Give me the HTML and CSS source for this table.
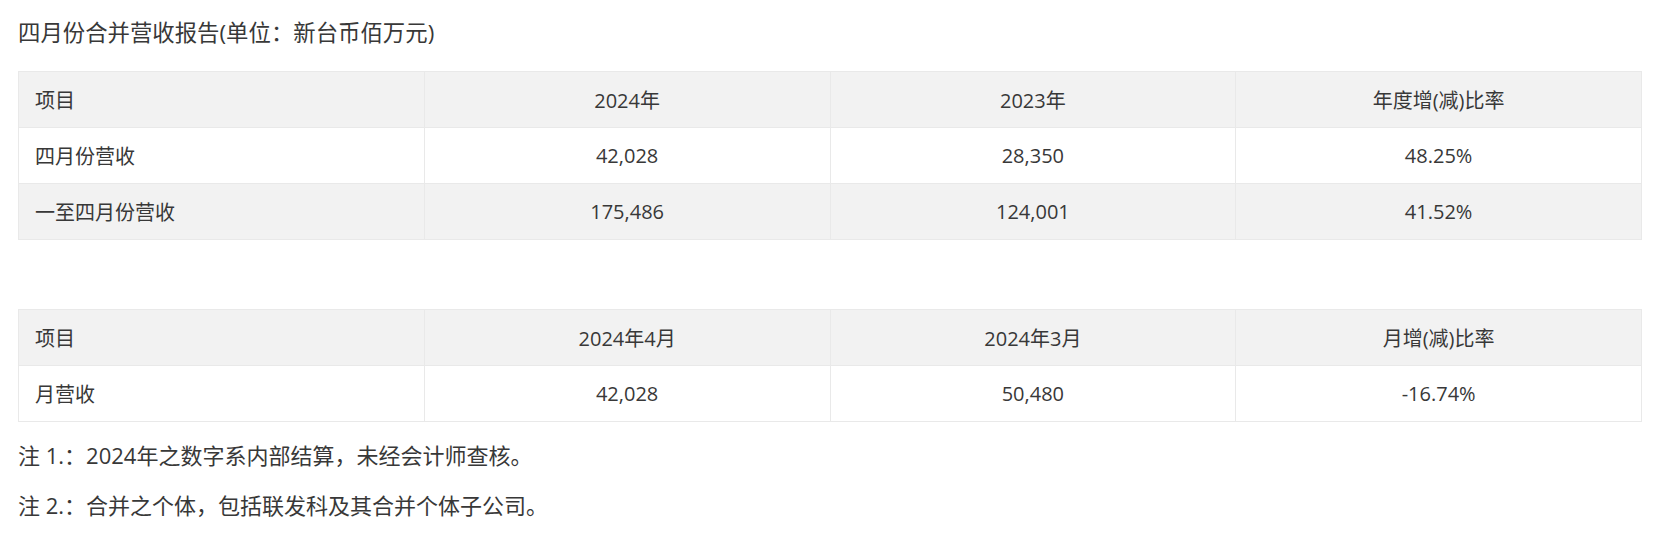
FILE: index.html
```html
<!DOCTYPE html>
<html lang="zh-CN">
<head>
<meta charset="utf-8">
<title>四月份合并营收报告</title>
<link rel="stylesheet" href="styles.css">
</head>
<body>
<div class="page">
  <h2 class="title">四月份合并营收报告(单位：新台币佰万元)</h2>
  <table class="report">
    <thead>
      <tr><th class="first">项目</th><th>2024年</th><th>2023年</th><th>年度增(减)比率</th></tr>
    </thead>
    <tbody>
      <tr><td class="first">四月份营收</td><td>42,028</td><td>28,350</td><td>48.25%</td></tr>
      <tr class="alt"><td class="first">一至四月份营收</td><td>175,486</td><td>124,001</td><td>41.52%</td></tr>
    </tbody>
  </table>
  <table class="report second">
    <thead>
      <tr><th class="first">项目</th><th>2024年4月</th><th>2024年3月</th><th>月增(减)比率</th></tr>
    </thead>
    <tbody>
      <tr><td class="first">月营收</td><td>42,028</td><td>50,480</td><td>-16.74%</td></tr>
    </tbody>
  </table>
  <p class="note">注 1.：2024年之数字系内部结算，未经会计师查核。</p>
  <p class="note">注 2.：合并之个体，包括联发科及其合并个体子公司。</p>
</div>
</body>
</html>
```
FILE: styles.css
```css
html, body {
  margin: 0;
  padding: 0;
  background: #ffffff;
}
body {
  font-family: "Open Sans", "Noto Sans CJK SC", sans-serif;
  color: #383838;
}
.page {
  padding: 0 14px 0 18px;
}
.title {
  margin: 0;
  padding: 18px 0 23px;
  font-size: 22.4px;
  line-height: 30px;
  font-weight: normal;
  color: #383838;
}
.report {
  width: 100%;
  border-collapse: collapse;
  table-layout: fixed;
}
.report th,
.report td {
  height: 55px;
  padding: 0 16px;
  border: 1px solid #e9e9e9;
  font-size: 20px;
  font-weight: normal;
  text-align: center;
  color: #383838;
}
.report thead th {
  background: #f2f2f2;
}
.report tr.alt td {
  background: #f2f2f2;
}
.report .first {
  text-align: left;
}
.report.second {
  margin-top: 69px;
}
.note {
  margin: 0;
  font-size: 22px;
  line-height: 50px;
  color: #383838;
}
.report.second + .note {
  margin-top: 8px;
}
```
